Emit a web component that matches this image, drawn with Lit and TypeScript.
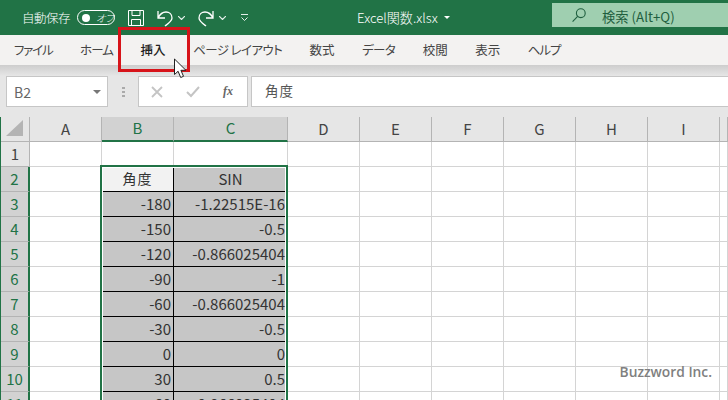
import { LitElement, css, html, svg } from 'lit';
import { customElement } from 'lit/decorators.js';

// tracking per label: the ribbon's kana are set narrower than palt gives
const TABS = [
  { label: 'ファイル', ls: -1.2 },
  { label: 'ホーム', ls: -0.9 },
  { label: '挿入', ls: 0 },
  { label: 'ページ レイアウト', ls: -0.6 },
  { label: '数式', ls: 0 },
  { label: 'データ', ls: -0.6 },
  { label: '校閲', ls: 0 },
  { label: '表示', ls: 0 },
  { label: 'ヘルプ', ls: -1 },
];
const COLS = ['A', 'B', 'C', 'D', 'E', 'F', 'G', 'H', 'I', ''];
const DATA: string[][] = [
  ['角度', 'SIN'],
  ['-180', '-1.22515E-16'],
  ['-150', '-0.5'],
  ['-120', '-0.866025404'],
  ['-90', '-1'],
  ['-60', '-0.866025404'],
  ['-30', '-0.5'],
  ['0', '0'],
  ['30', '0.5'],
  ['60', '0.866025404'],
];

const chevron = svg`<path d="M0 0l3.5 3.5L7 0" fill="none" stroke="currentColor" stroke-width="1.2"/>`;

@customElement('app-root')
export class AppRoot extends LitElement {
  static styles = css`
    :host {
      display: block;
      width: 728px;
      height: 400px;
      overflow: hidden;
      position: relative;
      font-family: 'Noto Sans CJK JP', 'Noto Sans', sans-serif;
      font-feature-settings: 'palt';
      color: #444;
      background: #e6e6e6;
    }
    svg { display: block; flex: none; }
    .title {
      height: 35px;
      background: #217346;
      color: #fff;
      display: flex;
      align-items: center;
      font-size: 12.5px;
      font-weight: 300;
    }
    .autosave { margin-left: 22px; width: 55px; padding-bottom: 1px; letter-spacing: -0.5px; }
    .toggle {
      width: 38px;
      height: 15px;
      box-sizing: border-box;
      border: 1px solid #fff;
      border-radius: 8px;
      display: flex;
      align-items: center;
      gap: 6px;
      padding-left: 4px;
      font-size: 10px;
      font-style: italic;
    }
    .dot { width: 8px; height: 8px; border-radius: 50%; background: #fff; }
    .save { margin-left: 13px; }
    .undo { margin-left: 13px; }
    .chev { margin-left: 5px; color: #e4efe9; }
    .redo { margin-left: 13px; }
    .custom { margin-left: 15px; }
    .file { margin-left: 109px; width: 85px; font-size: 13.1px; white-space: nowrap; }
    .file-arrow {
      width: 0;
      height: 0;
      border: 3px solid transparent;
      border-top: 3px solid #fff;
      border-bottom: 0;
      margin-left: 2px;
    }
    .search {
      margin-left: auto;
      margin-top: -5px;
      width: 176px;
      height: 24px;
      background: #9fcfb0;
      color: #1f5f3f;
      display: flex;
      align-items: center;
      font-size: 13.3px;
      font-weight: 400;
    }
    .search svg { margin-left: 20px; margin-right: 16px; }
    .search span { padding-top: 2px; }
    .tabs {
      height: 30px;
      box-sizing: border-box;
      padding: 0 0 2px 14px;
      background: #f3f2f1;
      display: flex;
      align-items: center;
      gap: 27.5px;
      font-size: 12.5px;
      color: #444;
    }
    .tab { position: relative; white-space: nowrap; }
    .tab.on { color: #222; font-weight: 500; }
    .tab.on::before {
      content: '';
      position: absolute;
      z-index: -1;
      inset: -5px -13px -5px;
      background: #f9f8f8;
    }
    .tabs-wrap { position: relative; z-index: 0; }
    .shade {
      height: 11px;
      background: linear-gradient(#cdcdcd, #e6e6e6);
    }
    .formula {
      height: 31px;
      display: flex;
      gap: 4px;
      padding-left: 6px;
      box-sizing: border-box;
    }
    .box {
      background: #fff;
      border: 1px solid #c6c6c6;
      box-sizing: border-box;
      height: 31px;
      display: flex;
      align-items: center;
    }
    .name { width: 102px; padding: 0 6px 0 7px; justify-content: space-between; font-size: 14px; color: #666; }
    .name i { border: 4px solid transparent; border-top: 4px solid #777; border-bottom: 0; }
    .grip {
      width: 3px;
      margin: 0 9px 0 10px;
      display: flex;
      flex-direction: column;
      justify-content: center;
      gap: 2px;
    }
    .grip i { height: 2px; background: #aaa; }
    .btns { width: 110px; padding-left: 12px; }
    .fx {
      margin-left: 23px;
      font: italic bold 12px 'Liberation Serif', serif;
      color: #666;
    }
    .check { margin-left: 23px; }
    .input {
      flex: 1;
      margin-left: -1px;
      padding: 0 0 3px 13px;
      font-size: 13.5px;
      color: #555;
      letter-spacing: 1px;
      border-right: 0;
    }
    .gap { height: 10px; }
    .sheet {
      position: relative;
      display: grid;
      grid-template-columns: 29px 72px 72px 114px repeat(5, 72px) 72px 8px;
      grid-auto-rows: 25px;
      background: #fff;
      font-size: 15px;
      border-left: 1px solid #217346;
      color: #333;
    }
    .c {
      box-sizing: border-box;
      border-right: 1px solid #d4d4d4;
      border-bottom: 1px solid #d4d4d4;
      padding: 0 2px 2px 0;
      display: flex;
      align-items: center;
      justify-content: flex-end;
      white-space: nowrap;
      overflow: hidden;
    }
    .h { background: #e6e6e6; justify-content: center; padding: 0 0 2px; border-color: #b4b4b4; color: #444; }
    .h.sel { background: #d2d2d2; color: #217346; }
    .h.col.sel { border-bottom: 2px solid #217346; }
    .h.row.sel { border-right: 2px solid #217346; }
    .corner { background: #e6e6e6; justify-content: center; padding: 0; border-color: #b4b4b4; }
    .t { background: #c6c6c6; border-right: 1px solid #000; border-bottom: 1px solid #000; }
    .t.edge { border-right-color: #c6c6c6; }
    .t.head { justify-content: center; padding-right: 0; }
    .t.active { background: #f2f2f2; font-size: 14px; letter-spacing: 1px; }
    .selection {
      position: absolute;
      left: 99px;
      top: 48px;
      width: 188px;
      height: 260px;
      box-sizing: border-box;
      border: 2px solid #217346;
      box-shadow: inset 0 0 0 1px #fff;
      pointer-events: none;
    }
    .red {
      position: absolute;
      left: 118px;
      top: 27px;
      width: 72px;
      height: 45px;
      box-sizing: border-box;
      border: 3px solid #d7141a;
    }
    .cursor { position: absolute; left: 172px; top: 57px; }
    .mark {
      position: absolute;
      right: 16px;
      top: 362px;
      font: 600 13.8px 'Open Sans', sans-serif;
      color: #808080;
    }
  `;

  renderCells() {
    const cells = [];
    cells.push(html`<div class="c corner">
      <svg width="18" height="17" style="margin:-1px 0 0 -1px"><path d="M17 0v16H0z" fill="#b4b4b4"/></svg>
    </div>`);
    COLS.forEach((col, i) => {
      const sel = i === 1 || i === 2;
      cells.push(html`<div class="c h col ${sel ? 'sel' : ''}">${col}</div>`);
    });
    for (let r = 1; r <= 11; r++) {
      const row = r >= 2 ? DATA[r - 2] : null;
      cells.push(html`<div class="c h row ${r >= 2 ? 'sel' : ''}">${r}</div>`);
      COLS.forEach((_, i) => {
        if (row && (i === 1 || i === 2)) {
          const cls = `c t ${r === 2 ? 'head' : ''} ${r === 2 && i === 1 ? 'active' : ''} ${i === 2 ? 'edge' : ''}`;
          cells.push(html`<div class=${cls}>${row[i - 1]}</div>`);
        } else {
          cells.push(html`<div class="c"></div>`);
        }
      });
    }
    return cells;
  }

  render() {
    return html`
      <div class="title">
        <span class="autosave">自動保存</span>
        <div class="toggle"><span class="dot"></span><span>オフ</span></div>
        <svg class="save" width="16" height="17" viewBox="0 0 16 17" fill="none" stroke="#fff">
          <path d="M.5 1.5h15v15H.5zM4 1.5v5h8v-5M3.5 16.5v-6h9v6"/>
        </svg>
        <svg class="undo" width="16" height="18" viewBox="0 0 16 18" fill="none" stroke="#fff" stroke-width="1.3">
          <path d="M1 2v7h7M1 9c2-4 5-6 8-6 3 0 6 2 6 6 0 3-3 5-7 8"/>
        </svg>
        <svg class="chev" width="7" height="4">${chevron}</svg>
        <svg class="redo" width="16" height="18" viewBox="0 0 16 18" fill="none" stroke="#fff" stroke-width="1.3">
          <path d="M15 2v7H8M15 9c-2-4-5-6-8-6-3 0-6 2-6 6 0 3 3 5 7 8"/>
        </svg>
        <svg class="chev" width="7" height="4">${chevron}</svg>
        <svg class="custom" width="7" height="7" viewBox="0 0 7 7" fill="none" stroke="#e4efe9">
          <path d="M0 .5h7M.5 3.5L3.5 6.5 6.5 3.5"/>
        </svg>
        <span class="file">Excel関数.xlsx</span>
        <span class="file-arrow"></span>
        <div class="search">
          <svg width="14" height="14" viewBox="0 0 14 14" fill="none" stroke="#1f5f3f" stroke-width="1.1">
            <circle cx="8.8" cy="5.2" r="4.4"/><path d="M5.6 8.4L.6 13.6"/>
          </svg>
          <span>検索 (Alt+Q)</span>
        </div>
      </div>
      <div class="tabs-wrap">
        <div class="tabs">
          ${TABS.map((t) => html`<span class="tab ${t.label === '挿入' ? 'on' : ''}" style="letter-spacing:${t.ls}px">${t.label}</span>`)}
        </div>
      </div>
      <div class="shade"></div>
      <div class="formula">
        <div class="box name"><span>B2</span><i></i></div>
        <div class="grip"><i></i><i></i><i></i></div>
        <div class="box btns">
          <svg width="12" height="12" viewBox="0 0 12 12" stroke="#c4c4c4" stroke-width="1.8"><path d="M1 1l10 10M11 1L1 11"/></svg>
          <svg class="check" width="14" height="12" viewBox="0 0 14 12" fill="none" stroke="#c4c4c4" stroke-width="2"><path d="M1 6l4 4 8-9"/></svg>
          <span class="fx">fx</span>
        </div>
        <div class="box input">角度</div>
      </div>
      <div class="gap"></div>
      <div class="sheet">
        ${this.renderCells()}
        <div class="selection"></div>
      </div>
      <div class="red"></div>
      <svg class="cursor" width="18" height="24" viewBox="0 0 18 24">
        <path d="M2.5 2v15.5l3.6-3.2 2.6 6.2 2.8-1.2-2.6-6h5z" fill="#fff" stroke="#222" stroke-width="1"/>
      </svg>
      <div class="mark">Buzzword Inc.</div>
    `;
  }
}
